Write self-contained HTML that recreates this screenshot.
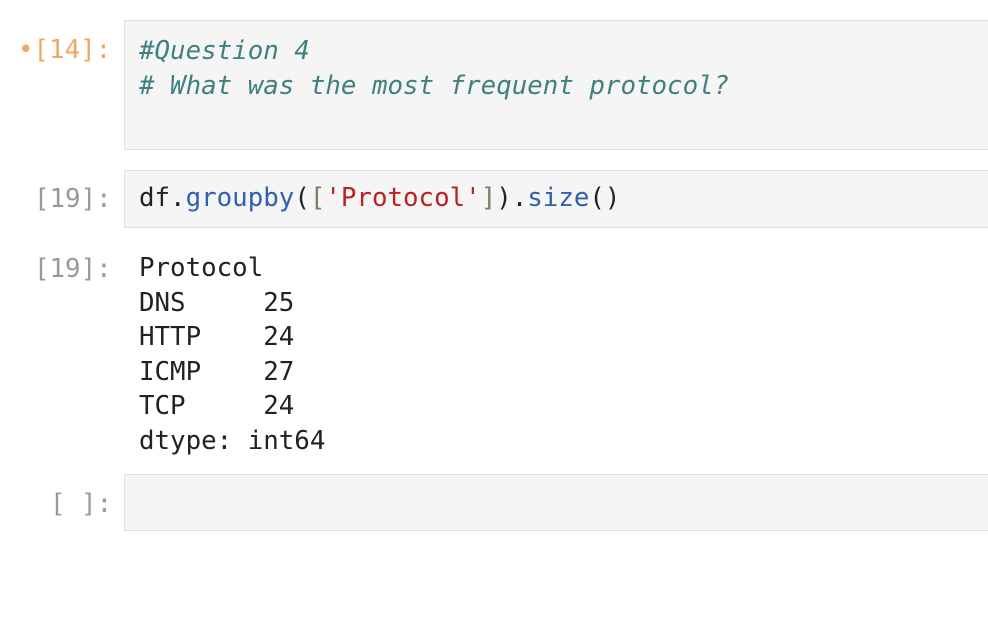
<!DOCTYPE html>
<html><head><style>
body{margin:0;background:#fff;width:988px;height:626px;overflow:hidden;position:relative;font-family:"DejaVu Sans Mono","Liberation Mono",monospace;font-size:25.8px;}
.box{position:absolute;left:124px;width:880px;background:#f5f5f5;border:1px solid #e0e0e0;box-sizing:border-box;}
.p{position:absolute;color:#999;white-space:pre;}
.t{position:absolute;left:139px;white-space:pre;line-height:34.5px;color:#222;}
.c{color:#408080;font-style:italic;}
</style></head><body>
<div class="box" style="top:20px;height:130px"></div>
<div class="box" style="top:170px;height:58px"></div>
<div class="box" style="top:474px;height:57px"></div>
<div class="p" style="left:18px;top:35px;color:#f0a860">•[14]:</div>
<div class="t c" style="top:34px">#Question 4
# What was the most frequent protocol?</div>
<div class="p" style="left:34px;top:184px">[19]:</div>
<div class="t" style="top:181px">df.<span style="color:#3060b0">groupby</span>(<span style="color:#808060">[</span><span style="color:#ba2121">'Protocol'</span><span style="color:#808060">]</span>).<span style="color:#3060b0">size</span>()</div>
<div class="p" style="left:34px;top:254px">[19]:</div>
<div class="t" style="top:251px">Protocol
DNS     25
HTTP    24
ICMP    27
TCP     24
dtype: int64</div>
<div class="p" style="left:50px;top:489px">[ ]:</div>
</body></html>
